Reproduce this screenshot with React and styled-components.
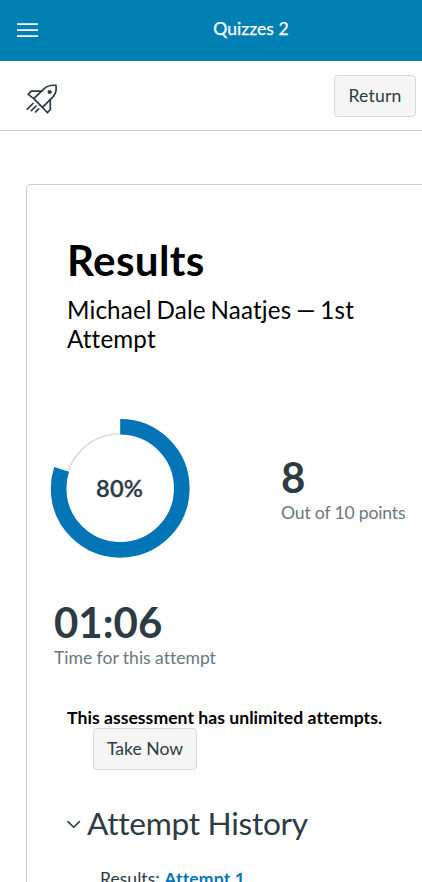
import React from "react";
import styled, { createGlobalStyle } from "styled-components";

const Global = createGlobalStyle`
  *, *::before, *::after { box-sizing: border-box; }
  html, body { margin: 0; padding: 0; }
  body {
    background: #fff;
    color: #2d3b45;
    font-family: Lato, "Liberation Sans", sans-serif;
    font-size: 17.6px;
    font-variant-ligatures: none;
    overflow: hidden;
  }
  h1, h2, p { margin: 0; font-weight: 400; }
`;

const Page = styled.div`
  width: 100%;
  height: 882px;
  overflow: hidden;
`;

const TopBar = styled.header`
  display: grid;
  grid-template-columns: 80px 1fr 0;
  align-items: center;
  height: 61px;
  padding-bottom: 3px;
  background: #007fb2;
  color: #fff;
`;

const MenuButton = styled.button`
  display: flex;
  width: 22px;
  margin: 3px 0 0 17px;
  padding: 0;
  border: 0;
  background: none;
`;

const BarTitle = styled.div`
  text-align: center;
  line-height: 24px;
  font-size: 17.6px;
  -webkit-text-stroke: 0.25px currentColor;
`;

const ToolRow = styled.div`
  display: flex;
  align-items: center;
  justify-content: space-between;
  height: 70px;
  padding: 0 6px 0 24px;
  border-bottom: 1px solid #c7cdd1;
`;

const Button = styled.button`
  height: 42px;
  width: ${(p) => p.$width}px;
  padding: ${(p) => p.$padTop || 0}px 0 0;
  border: 1px solid #d7d7d7;
  border-radius: 4px;
  background: #f5f5f5;
  color: #2d3b45;
  font: inherit;
  letter-spacing: ${(p) => p.$track || 0}px;
  line-height: 24px;
`;

const Card = styled.main`
  width: 440px;
  height: 760px;
  margin: 53px 0 0 26px;
  padding: 51px 0 0 40px;
  border: 1px solid #c7cdd1;
  border-radius: 4px;
`;

const Title = styled.h1`
  color: #000;
  font-size: 42.2px;
  letter-spacing: 0.35px;
  line-height: 48px;
  font-weight: 700;
`;

const Subtitle = styled.p`
  width: 320px;
  margin-top: 11px;
  color: #000;
  font-size: 24.2px;
  letter-spacing: 0.15px;
  word-spacing: -1.5px;
  line-height: 29px;
`;

const Stats = styled.section`
  display: grid;
  grid-template-columns: 231px 1fr;
  align-items: start;
  margin: 65px 0 0 -17px;
`;

const Donut = styled.svg`
  display: block;
  width: 140px;
  height: 140px;
  text {
    font: 600 23.6px Lato, sans-serif;
    letter-spacing: 0.2px;
    fill: #2d3b45;
    stroke: #2d3b45;
    stroke-width: 0.3px;
  }
`;

const Stat = styled.div`
  padding: ${(p) => p.$pad};
`;

const Value = styled.div`
  font-size: 42px;
  line-height: 46px;
  font-weight: 700;
`;

const Caption = styled.div`
  margin-top: 1px;
  color: #6b7780;
  font-size: 17.6px;
  letter-spacing: ${(p) => p.$track || 0}px;
  line-height: 24px;
  white-space: nowrap;
`;

const Notice = styled.p`
  margin-top: 37px;
  color: #000;
  font-size: 17.6px;
  font-weight: 700;
  letter-spacing: 0.03px;
  line-height: 22px;
`;

const Action = styled.div`
  display: flex;
  margin-top: -1px;
  padding-left: 26px;
`;

const History = styled.h2`
  display: flex;
  align-items: center;
  gap: 6px;
  margin-top: 34px;
  font-size: 31.7px;
  letter-spacing: -0.3px;
  line-height: 38px;
  height: 40px;
  padding-bottom: 2px;

  svg { margin-top: 2px; }
`;

const ResultLine = styled.p`
  margin: 22px 0 0 33px;
  line-height: 26px;
`;

const Link = styled.a`
  color: #0374b5;
  font-weight: 700;
  letter-spacing: 0.15px;
`;

const MenuIcon = () => (
  <svg width="22" height="15" viewBox="0 0 22 15" fill="#fff">
    <path d="M0 0.2h21v1.7H0zM0 6.2h21v1.7H0zM0 12.2h21v1.7H0z" />
  </svg>
);

const RocketMark = styled.svg`
  margin-top: 6px;
`;

const RocketIcon = () => (
  <RocketMark width="36" height="32" viewBox="24 83 36 32" fill="none" stroke="#2d3b45" strokeWidth="1.7" strokeLinejoin="round" strokeLinecap="round">
    <path d="M33.8 98.6 44 88.8Q48.6 84.6 56 85.4Q57 92.5 53 96.8L42.4 107.3Z" />
    <path d="M41.5 91.2H31.2L28.2 94.4 33.8 98.6M50.3 99.6V109.5L47.4 112.8 42.4 107.3" />
    <path d="M27.2 109.2 33 103.5M31.4 110.7 36 106M35.5 112 38.7 108.8" />
    <circle cx="49.6" cy="92" r="1.7" fill="#2d3b45" strokeWidth="0.8" />
  </RocketMark>
);

const Chevron = () => (
  <svg width="14" height="9" viewBox="0 0 14 9" fill="none" stroke="#2d3b45" strokeWidth="1.6" strokeLinecap="round" strokeLinejoin="round">
    <path d="M1 1.6 6.7 7.2 12.4 1.6" />
  </svg>
);

const ScoreDonut = () => (
  <Donut viewBox="0 0 140 140" role="img" aria-label="80%">
    <circle cx="70.2" cy="70.3" r="54.5" fill="none" stroke="#d3d7da" strokeWidth="1.3" />
    <circle
      cx="70.2" cy="70.3" r="61.6" fill="none" stroke="#0374b5" strokeWidth="15.6"
      pathLength="100" strokeDasharray="80 20" transform="rotate(-90 70.2 70.3)"
    />
    <text x="69.6" y="78.6" textAnchor="middle">80%</text>
  </Donut>
);

export default function App() {
  return (
    <Page>
      <Global />
      <TopBar>
        <MenuButton aria-label="Menu"><MenuIcon /></MenuButton>
        <BarTitle>Quizzes 2</BarTitle>
      </TopBar>
      <ToolRow>
        <RocketIcon />
        <Button $width={82} $padTop={1} $track={0.2}>Return</Button>
      </ToolRow>
      <Card>
        <Title>Results</Title>
        <Subtitle>Michael Dale Naatjes — 1st Attempt</Subtitle>
        <Stats>
          <ScoreDonut />
          <Stat $pad="36px 0 0">
            <Value>8</Value>
            <Caption $track={-0.18}>Out of 10 points</Caption>
          </Stat>
          <Stat $pad="41px 0 0 4px">
            <Value>01:06</Value>
            <Caption $track={-0.04}>Time for this attempt</Caption>
          </Stat>
        </Stats>
        <Notice>This assessment has unlimited attempts.</Notice>
        <Action><Button $width={104}>Take Now</Button></Action>
        <History><Chevron />Attempt History</History>
        <ResultLine>Results: <Link>Attempt 1</Link></ResultLine>
      </Card>
    </Page>
  );
}
